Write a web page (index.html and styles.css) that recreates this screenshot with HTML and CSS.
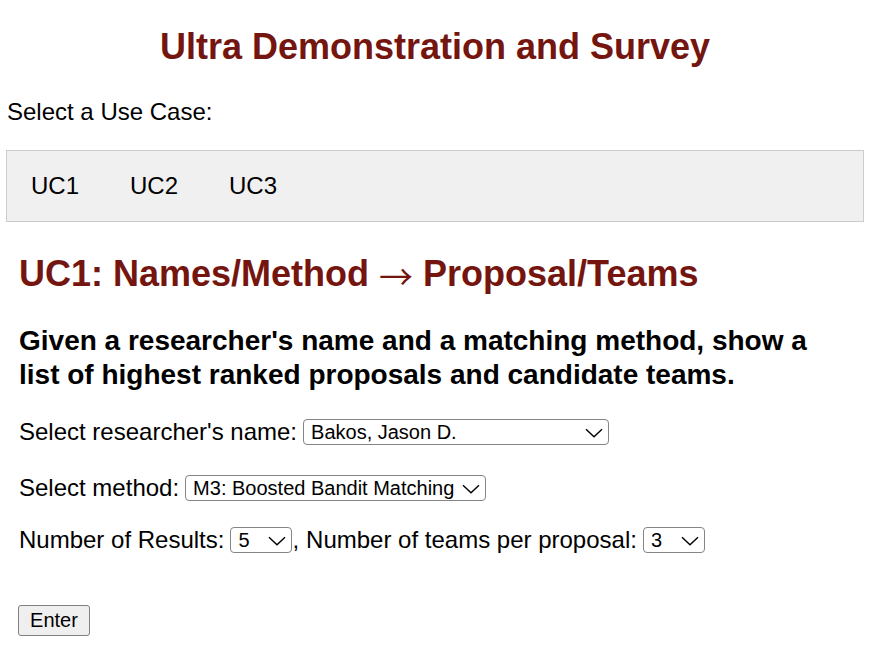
FILE: index.html
```html
<!DOCTYPE html>
<html lang="en">
<head>
<meta charset="utf-8">
<title>Ultra Demonstration and Survey</title>
<link rel="stylesheet" href="styles.css">
</head>
<body>
<h1 class="title">Ultra Demonstration and Survey</h1>
<p class="intro">Select a Use Case:</p>
<nav class="tabs">
  <a class="tab" href="#">UC1</a>
  <a class="tab" href="#">UC2</a>
  <a class="tab" href="#">UC3</a>
</nav>
<section class="usecase">
  <h2 class="uc-title">UC1: Names/Method <span class="arrow">→</span> Proposal/Teams</h2>
  <h3 class="uc-desc">Given a researcher's name and a matching method, show a list of highest ranked proposals and candidate teams.</h3>
  <form class="uc-form">
    <div class="row row-name">
      <label>Select researcher's name:</label>
      <span class="sel sel-name">
        <select><option>Bakos, Jason D.</option></select>
        <svg class="chev" viewBox="0 0 18 10" width="18" height="10"><path d="M1 1.2 L9 8.8 L17 1.2" fill="none" stroke="#000" stroke-width="1.4"/></svg>
      </span>
    </div>
    <div class="row row-method">
      <label>Select method:</label>
      <span class="sel sel-method">
        <select><option>M3: Boosted Bandit Matching</option></select>
        <svg class="chev" viewBox="0 0 18 10" width="18" height="10"><path d="M1 1.2 L9 8.8 L17 1.2" fill="none" stroke="#000" stroke-width="1.4"/></svg>
      </span>
    </div>
    <div class="row row-num">
      <label>Number of Results:</label>
      <span class="sel sel-num">
        <select><option>5</option></select>
        <svg class="chev" viewBox="0 0 18 10" width="18" height="10"><path d="M1 1.2 L9 8.8 L17 1.2" fill="none" stroke="#000" stroke-width="1.4"/></svg>
      </span><span class="comma">,</span>
      <label>Number of teams per proposal:</label>
      <span class="sel sel-num">
        <select><option>3</option></select>
        <svg class="chev" viewBox="0 0 18 10" width="18" height="10"><path d="M1 1.2 L9 8.8 L17 1.2" fill="none" stroke="#000" stroke-width="1.4"/></svg>
      </span>
    </div>
    <div class="row row-btn">
      <button type="button" class="btn">Enter</button>
    </div>
  </form>
</section>
</body>
</html>
```

FILE: styles.css
```css
html, body {
  margin: 0;
  padding: 0;
  background: #fff;
}
body {
  padding: 0 8px 0 6px;
  font-family: "Liberation Sans", Arial, sans-serif;
  font-size: 24px;
  color: #000;
}
.title {
  margin: 26px 0 0;
  font-size: 36px;
  line-height: 42px;
  font-weight: bold;
  color: #74150f;
  text-align: center;
}
.intro {
  margin: 30px 0 0 1px;
  line-height: 28px;
}
.tabs {
  margin-top: 24px;
  display: flex;
  gap: 51px;
  padding: 21px 24px;
  background: #f0f0f0;
  border: 1px solid #cccccc;
}
.tab {
  color: #000;
  text-decoration: none;
  line-height: 28px;
}
.usecase {
  padding-left: 13px;
}
.uc-title {
  margin: 31px 0 0;
  height: 42px;
  font-size: 36px;
  line-height: 42px;
  color: #74150f;
}
.arrow {
  font-family: "Noto Sans CJK JP", sans-serif;
  font-weight: normal;
  font-size: 34px;
  line-height: 1;
  vertical-align: -4px;
}
.uc-desc {
  margin: 29px 0 0;
  font-size: 28px;
  line-height: 34px;
  font-weight: bold;
  max-width: 820px;
}
.uc-form {
  display: flex;
  flex-direction: column;
}
.row {
  display: flex;
  align-items: flex-start;
  height: 30px;
  white-space: nowrap;
}
.row label,
.comma {
  line-height: 30px;
}
.row-name { margin-top: 25px; }
.row-method { margin-top: 26px; }
.row-num { margin-top: 22px; }
.row-btn { margin-top: 50px; height: 31px; }
.row label {
  margin-right: 6px;
}
.comma {
  margin-right: 7px;
}
.sel {
  position: relative;
  display: inline-block;
  height: 26px;
  margin-top: 2px;
}
.sel select {
  appearance: none;
  -webkit-appearance: none;
  display: block;
  height: 26px;
  box-sizing: border-box;
  border: 1px solid #858585;
  border-radius: 4px;
  background: #fff;
  font-family: "Liberation Sans", Arial, sans-serif;
  font-size: 20px;
  color: #000;
  padding: 0 30px 0 7px;
  margin: 0;
}
.sel-name select { width: 306px; }
.sel-method select { width: 301px; }
.sel-num select { width: 62px; }
.chev {
  position: absolute;
  right: 6px;
  top: 9px;
  pointer-events: none;
}
.btn {
  height: 31px;
  width: 72px;
  margin-left: -1px;
  box-sizing: border-box;
  background: #efefef;
  border: 1px solid #808080;
  border-radius: 3px;
  font-family: "Liberation Sans", Arial, sans-serif;
  font-size: 20px;
  color: #000;
  padding: 0;
}
```
